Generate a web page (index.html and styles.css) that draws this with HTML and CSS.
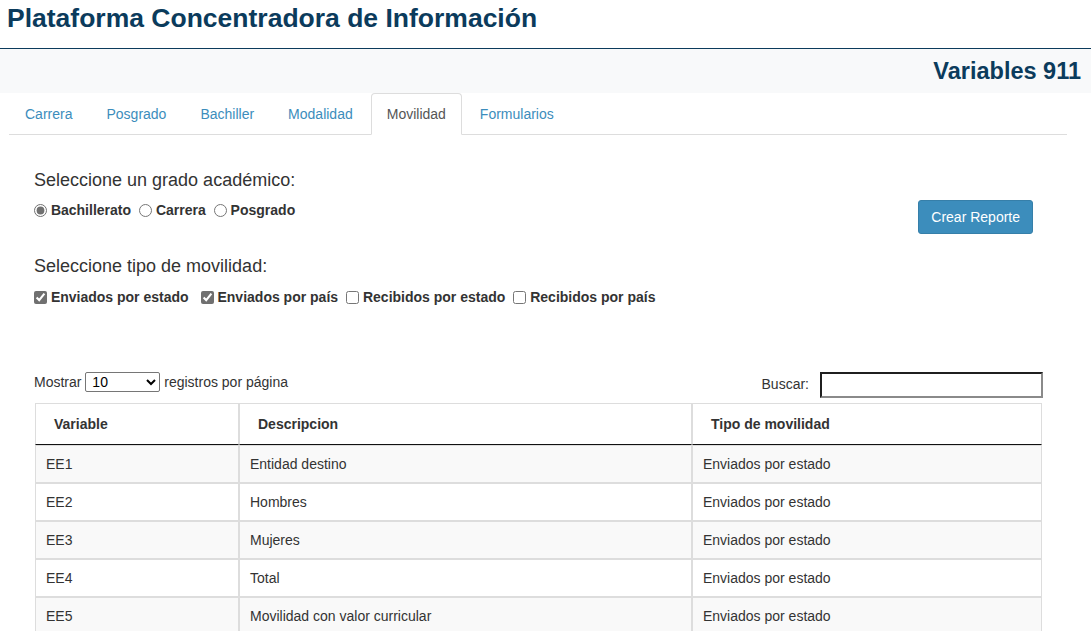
FILE: index.html
```html
<!DOCTYPE html>
<html lang="es">
<head>
<meta charset="utf-8">
<title>Plataforma Concentradora de Información</title>
<link rel="stylesheet" href="styles.css">
</head>
<body>
<header class="site-header">
  <h1 class="site-title">Plataforma Concentradora de Información</h1>
</header>
<div class="page-band">
  <h2 class="page-title">Variables 911</h2>
</div>
<div class="main">
  <ul class="tabs">
    <li class="tab"><a href="#">Carrera</a></li>
    <li class="tab"><a href="#">Posgrado</a></li>
    <li class="tab"><a href="#">Bachiller</a></li>
    <li class="tab"><a href="#">Modalidad</a></li>
    <li class="tab active"><a href="#">Movilidad</a></li>
    <li class="tab"><a href="#">Formularios</a></li>
  </ul>
  <div class="tab-content">
    <h4 class="section-title first">Seleccione un grado académico:</h4>
    <div class="grade-row">
      <div class="options">
        <label class="opt"><input type="radio" name="grado" checked> Bachillerato</label>
        <label class="opt"><input type="radio" name="grado"> Carrera</label>
        <label class="opt"><input type="radio" name="grado"> Posgrado</label>
      </div>
      <button class="btn-primary" type="button">Crear Reporte</button>
    </div>
    <h4 class="section-title second">Seleccione tipo de movilidad:</h4>
    <div class="options">
      <label class="opt wide"><input type="checkbox" checked> Enviados por estado</label>
      <label class="opt"><input type="checkbox" checked> Enviados por país</label>
      <label class="opt"><input type="checkbox"> Recibidos por estado</label>
      <label class="opt"><input type="checkbox"> Recibidos por país</label>
    </div>

    <div class="dt-controls">
      <div class="dt-length">Mostrar <select class="dt-select"><option>10</option><option>25</option><option>50</option><option>100</option></select> registros por página</div>
      <div class="dt-filter"><span class="dt-filter-label">Buscar:</span><input class="dt-search" type="search"></div>
    </div>

    <table class="data-table">
      <colgroup>
        <col class="c-var">
        <col class="c-desc">
        <col class="c-tipo">
      </colgroup>
      <thead>
        <tr><th>Variable</th><th>Descripcion</th><th>Tipo de movilidad</th></tr>
      </thead>
      <tbody>
        <tr class="odd"><td>EE1</td><td>Entidad destino</td><td>Enviados por estado</td></tr>
        <tr><td>EE2</td><td>Hombres</td><td>Enviados por estado</td></tr>
        <tr class="odd"><td>EE3</td><td>Mujeres</td><td>Enviados por estado</td></tr>
        <tr><td>EE4</td><td>Total</td><td>Enviados por estado</td></tr>
        <tr class="odd"><td>EE5</td><td>Movilidad con valor curricular</td><td>Enviados por estado</td></tr>
      </tbody>
    </table>
  </div>
</div>
</body>
</html>
```
FILE: styles.css
```css
html, body {
  overflow: hidden;
}
body {
  margin: 0;
  font-family: "Liberation Sans", Arial, sans-serif;
  font-size: 14px;
  line-height: 20px;
  color: #333;
  background: #fff;
}
.site-header {
  border-bottom: 1px solid #0b3b5c;
  height: 48px;
}
.site-title {
  margin: 0;
  padding: 2px 0 0 7px;
  font-size: 26.5px;
  line-height: 32px;
  font-weight: bold;
  color: #0b3b5c;
}
.page-band {
  background: #f8f9fa;
  height: 44px;
  padding-right: 10px;
  text-align: right;
}
.page-title {
  margin: 0;
  font-size: 23.5px;
  line-height: 44px;
  font-weight: bold;
  color: #0b3b5c;
}
.main {
  padding: 0 24px 0 9px;
}
.tabs {
  list-style: none;
  margin: 0;
  padding: 0;
  display: flex;
  border-bottom: 1px solid #ddd;
}
.tab {
  margin-right: 2px;
  margin-bottom: -1px;
}
.tab a {
  display: block;
  padding: 10px 15px;
  line-height: 20px;
  border: 1px solid transparent;
  border-radius: 4px 4px 0 0;
  color: #3c8dbc;
  text-decoration: none;
}
.tab.active a {
  color: #555;
  background: #fff;
  border-color: #ddd #ddd transparent #ddd;
}
.tab-content {
  padding: 0 24px 0 25px;
}
.section-title {
  margin: 0;
  font-size: 18px;
  line-height: 20px;
  font-weight: normal;
  color: #333;
}
.section-title.first {
  margin-top: 35px;
  margin-bottom: 10px;
}
.section-title.second {
  margin-top: 22px;
  margin-bottom: 11px;
}
.grade-row {
  display: flex;
  justify-content: space-between;
  align-items: flex-start;
}
.options {
  display: flex;
  align-items: center;
  height: 20px;
}
.opt {
  display: flex;
  align-items: center;
  font-weight: bold;
  color: #333;
  margin-right: 8px;
  white-space: pre;
}
.opt.wide {
  margin-right: 12px;
}
.opt input {
  width: 13px;
  height: 13px;
  margin: 0;
  accent-color: #707070;
}
.btn-primary {
  margin-right: 10px;
  height: 34px;
  padding: 6px 12px;
  font-family: inherit;
  font-size: 14px;
  line-height: 20px;
  color: #fff;
  background: #3c8dbc;
  border: 1px solid #367fa9;
  border-radius: 3px;
}
.dt-controls {
  margin-top: 65px;
  display: flex;
  justify-content: space-between;
  align-items: flex-start;
  height: 26px;
}
.dt-length {
  display: flex;
  align-items: center;
  white-space: pre;
  color: #333;
}
.dt-select {
  width: 75px;
  height: 20px;
  margin: 0;
  padding: 0 0 0 2px;
  font-family: inherit;
  font-size: 14px;
  color: #000;
  background: #fff;
  border: 1px solid #767676;
  border-radius: 2px;
}
.dt-filter {
  display: flex;
  align-items: flex-start;
}
.dt-filter-label {
  padding-top: 2px;
  margin-right: 11px;
}
.dt-search {
  box-sizing: border-box;
  width: 223px;
  height: 26px;
  margin: 0;
  padding: 0 4px;
  border-style: solid;
  border-width: 2px;
  border-color: #1f1f1f #8a8a8a #8a8a8a #1f1f1f;
  background: #fff;
  font-family: inherit;
  font-size: 14px;
}
.data-table {
  margin: 5px 0 0 1px;
  width: 1007px;
  table-layout: fixed;
  border-collapse: separate;
  border-spacing: 0;
}
.c-var { width: 204px; }
.c-desc { width: 453px; }
.c-tipo { width: 350px; }
.data-table th {
  text-align: left;
  font-weight: bold;
  padding: 10px 18px;
  line-height: 20px;
  border: 1px solid #ddd;
  border-bottom: 1px solid #111;
  color: #333;
}
.data-table td {
  padding: 8px 10px;
  line-height: 20px;
  border: 1px solid #ddd;
  color: #333;
}
.data-table tr.odd td {
  background: #f9f9f9;
}
```
